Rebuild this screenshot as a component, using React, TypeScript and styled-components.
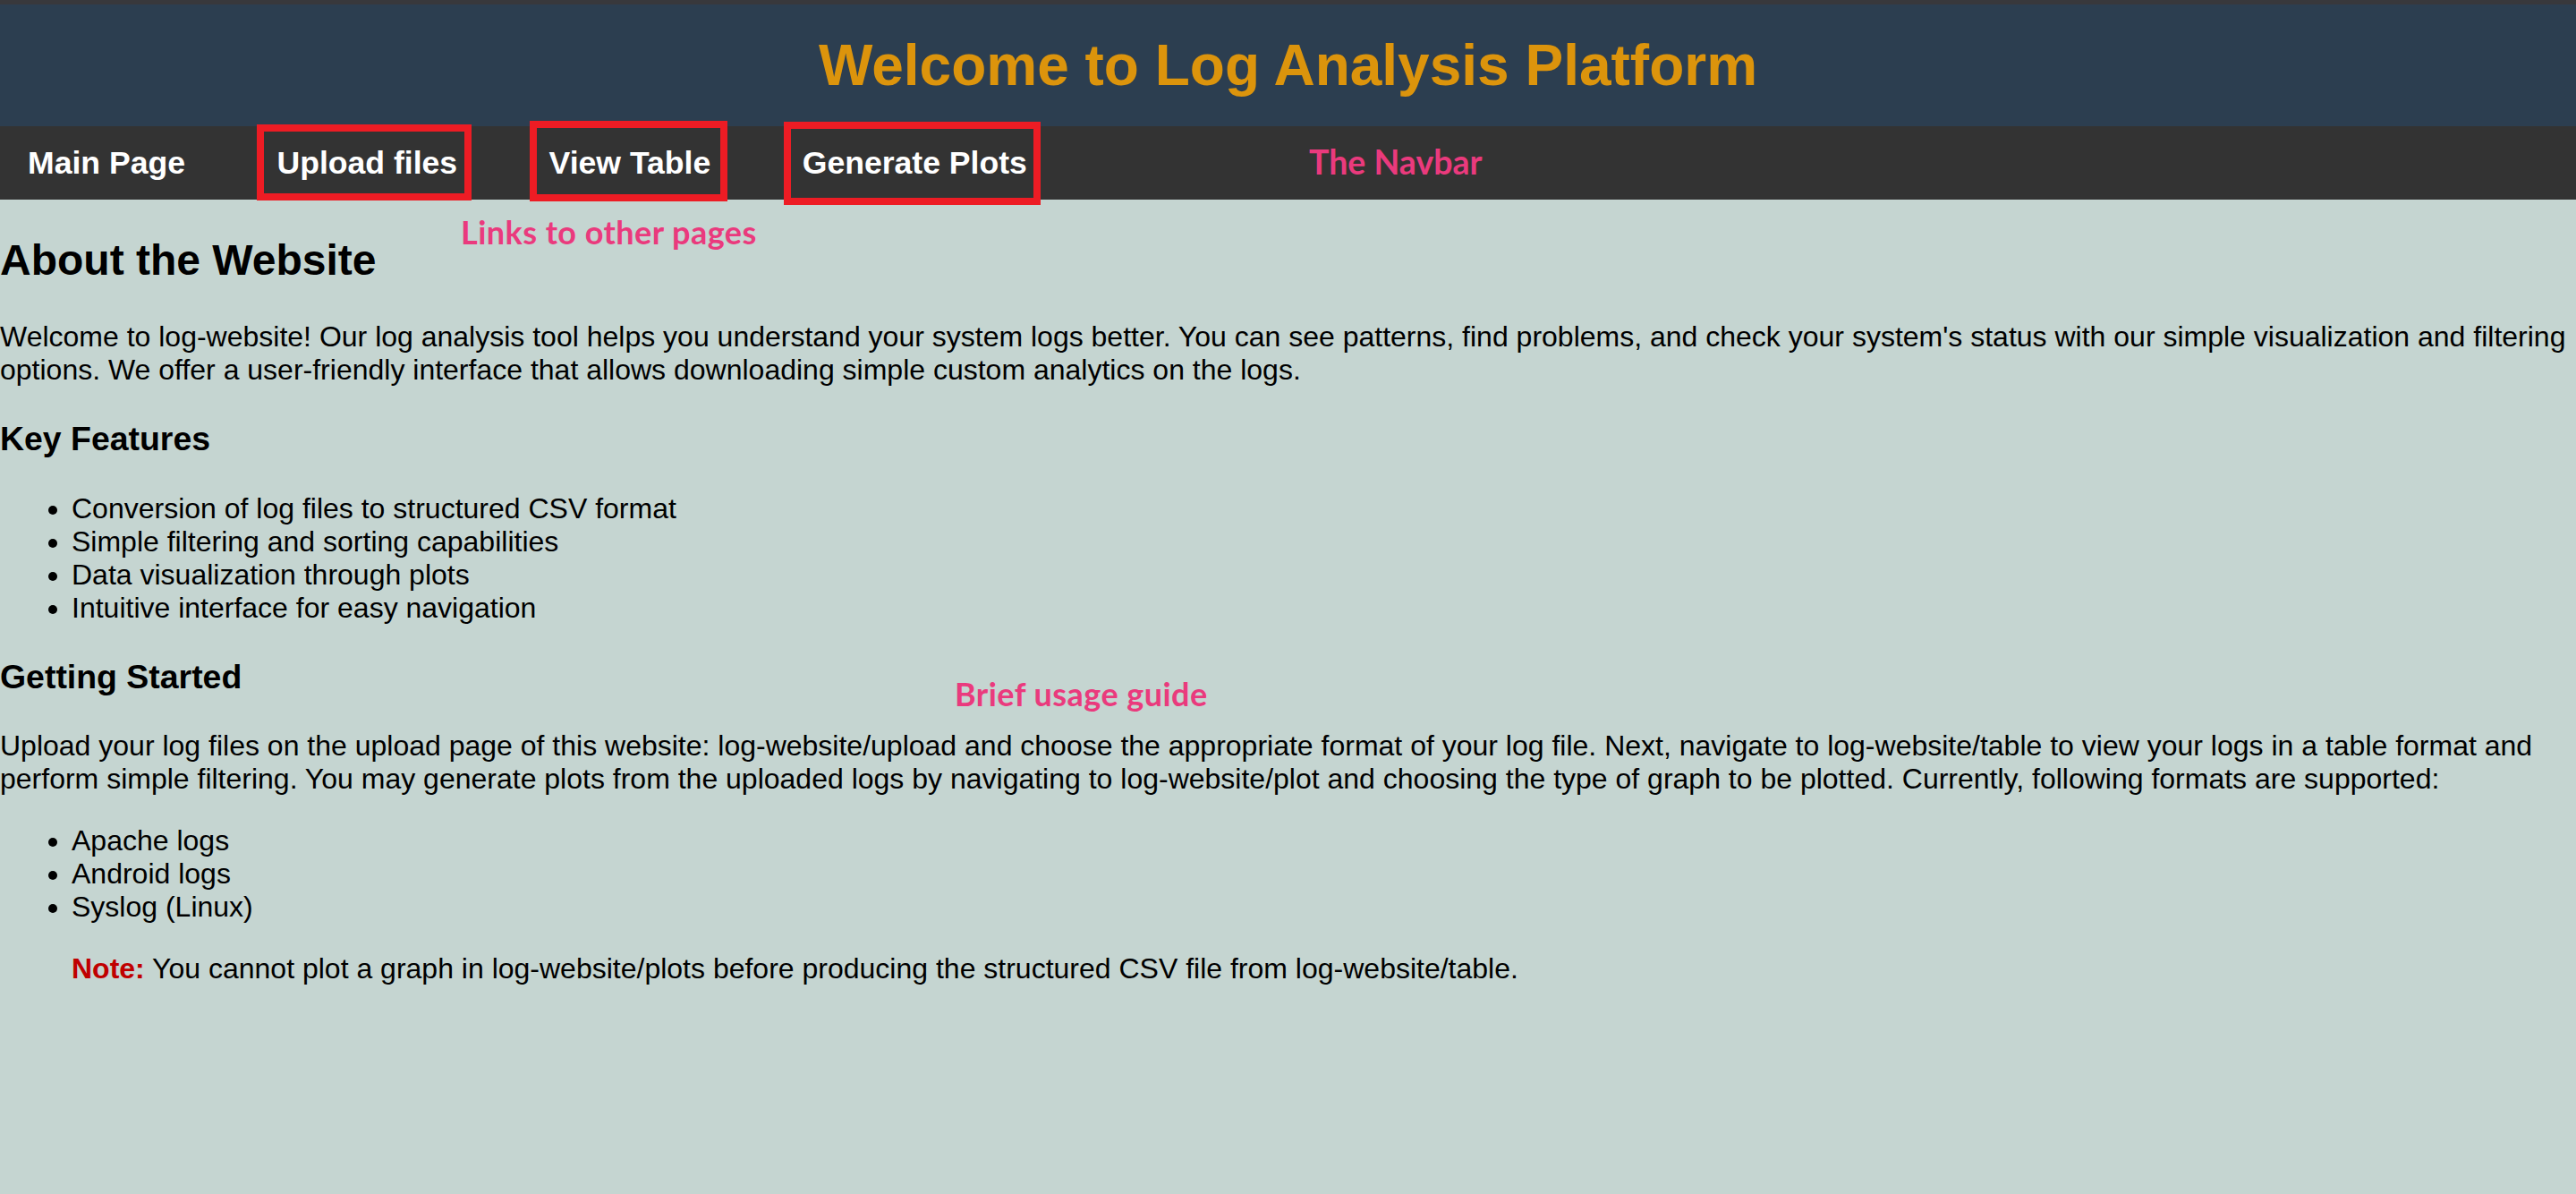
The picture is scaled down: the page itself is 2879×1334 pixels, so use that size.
import React from "react";
import styled, { createGlobalStyle } from "styled-components";

const GlobalStyle = createGlobalStyle`
  html, body {
    margin: 0;
    padding: 0;
    background: #c5d5d1;
  }
  body {
    font-family: "Liberation Sans", Arial, sans-serif;
  }
`;

const Page = styled.div`
  position: relative;
  min-height: 100vh;
  background: #c5d5d1;
  color: #000;
  font-family: "Liberation Sans", Arial, sans-serif;
  font-size: 32px;
  line-height: normal;
  overflow: hidden;
`;

const Header = styled.header`
  background: #2c3e50;
  border-top: 5px solid #38383c;
  padding: 31px 0;
  text-align: center;
`;

const Title = styled.h1`
  margin: 0;
  font-size: 64px;
  font-weight: bold;
  color: #dc940c;
`;

const Nav = styled.nav`
  display: flex;
  align-items: stretch;
  gap: 40.5px;
  height: 82px;
  background: #333333;
`;

const NavLink = styled.a`
  position: relative;
  display: block;
  padding: 20.5px 31px;
  color: #ffffff;
  font-size: 35.6px;
  font-weight: bold;
  text-decoration: none;
  white-space: nowrap;
`;

const Highlight = styled.span<{ $t: number; $r: number; $b: number; $l: number }>`
  position: absolute;
  top: ${(p) => p.$t}px;
  right: ${(p) => p.$r}px;
  bottom: ${(p) => p.$b}px;
  left: ${(p) => p.$l}px;
  border: 8px solid #ed1c24;
  pointer-events: none;
`;

const Callout = styled.span<{ $x: number; $y: number; $size: number; $spacing?: number }>`
  position: absolute;
  left: ${(p) => p.$x}px;
  top: ${(p) => p.$y}px;
  font-family: Lato, "Open Sans", sans-serif;
  font-weight: bold;
  font-size: ${(p) => p.$size}px;
  letter-spacing: ${(p) => p.$spacing ?? 0}px;
  color: #ea3a7d;
  white-space: nowrap;
  pointer-events: none;
`;

const Main = styled.main`
  padding: 0;
`;

const SectionTitle = styled.h2`
  margin: 39.84px 0;
  font-size: 48px;
  font-weight: bold;
`;

const SubTitle = styled.h3`
  margin: 37.44px 0;
  font-size: 37.44px;
  font-weight: bold;
`;

const Paragraph = styled.p`
  margin: 32px 0;
`;

const List = styled.ul`
  margin: 32px 0;
  padding-left: 80px;
  list-style: disc;
`;

const Note = styled.p`
  margin: 32px 0 32px 80px;
`;

const NoteLabel = styled.strong`
  color: #c00000;
  font-weight: bold;
`;

export default function App() {
  return (
    <>
      <GlobalStyle />
      <Page>
        <Header>
          <Title>Welcome to Log Analysis Platform</Title>
        </Header>
        <Nav>
          <NavLink href="#">Main Page</NavLink>
          <NavLink href="#">
            Upload files
            <Highlight $t={-2} $r={15} $b={-1} $l={9} />
          </NavLink>
          <NavLink href="#">
            View Table
            <Highlight $t={-6} $r={12} $b={-2} $l={9} />
          </NavLink>
          <NavLink href="#">
            Generate Plots
            <Highlight $t={-5} $r={16} $b={-6} $l={10} />
          </NavLink>
        </Nav>
        <Main>
          <SectionTitle>About the Website</SectionTitle>
          <Paragraph>
            Welcome to log-website! Our log analysis tool helps you understand your system logs better. You can see
            patterns, find problems, and check your system's status with our simple visualization and filtering
            options. We offer a user-friendly interface that allows downloading simple custom analytics on the logs.
          </Paragraph>
          <SubTitle>Key Features</SubTitle>
          <List>
            <li>Conversion of log files to structured CSV format</li>
            <li>Simple filtering and sorting capabilities</li>
            <li>Data visualization through plots</li>
            <li>Intuitive interface for easy navigation</li>
          </List>
          <SubTitle>Getting Started</SubTitle>
          <Paragraph>
            Upload your log files on the upload page of this website: log-website/upload and choose the appropriate
            format of your log file. Next, navigate to log-website/table to view your logs in a table format and
            perform simple filtering. You may generate plots from the uploaded logs by navigating to log-website/plot
            and choosing the type of graph to be plotted. Currently, following formats are supported:
          </Paragraph>
          <List>
            <li>Apache logs</li>
            <li>Android logs</li>
            <li>Syslog (Linux)</li>
          </List>
          <Note>
            <NoteLabel>Note:</NoteLabel> You cannot plot a graph in log-website/plots before producing the structured
            CSV file from log-website/table.
          </Note>
        </Main>
        <Callout $x={1463} $y={158} $size={37.5}>
          The Navbar
        </Callout>
        <Callout $x={515} $y={236.5} $size={36} $spacing={0.45}>
          Links to other pages
        </Callout>
        <Callout $x={1067} $y={752.5} $size={36} $spacing={0.45}>
          Brief usage guide
        </Callout>
      </Page>
    </>
  );
}
